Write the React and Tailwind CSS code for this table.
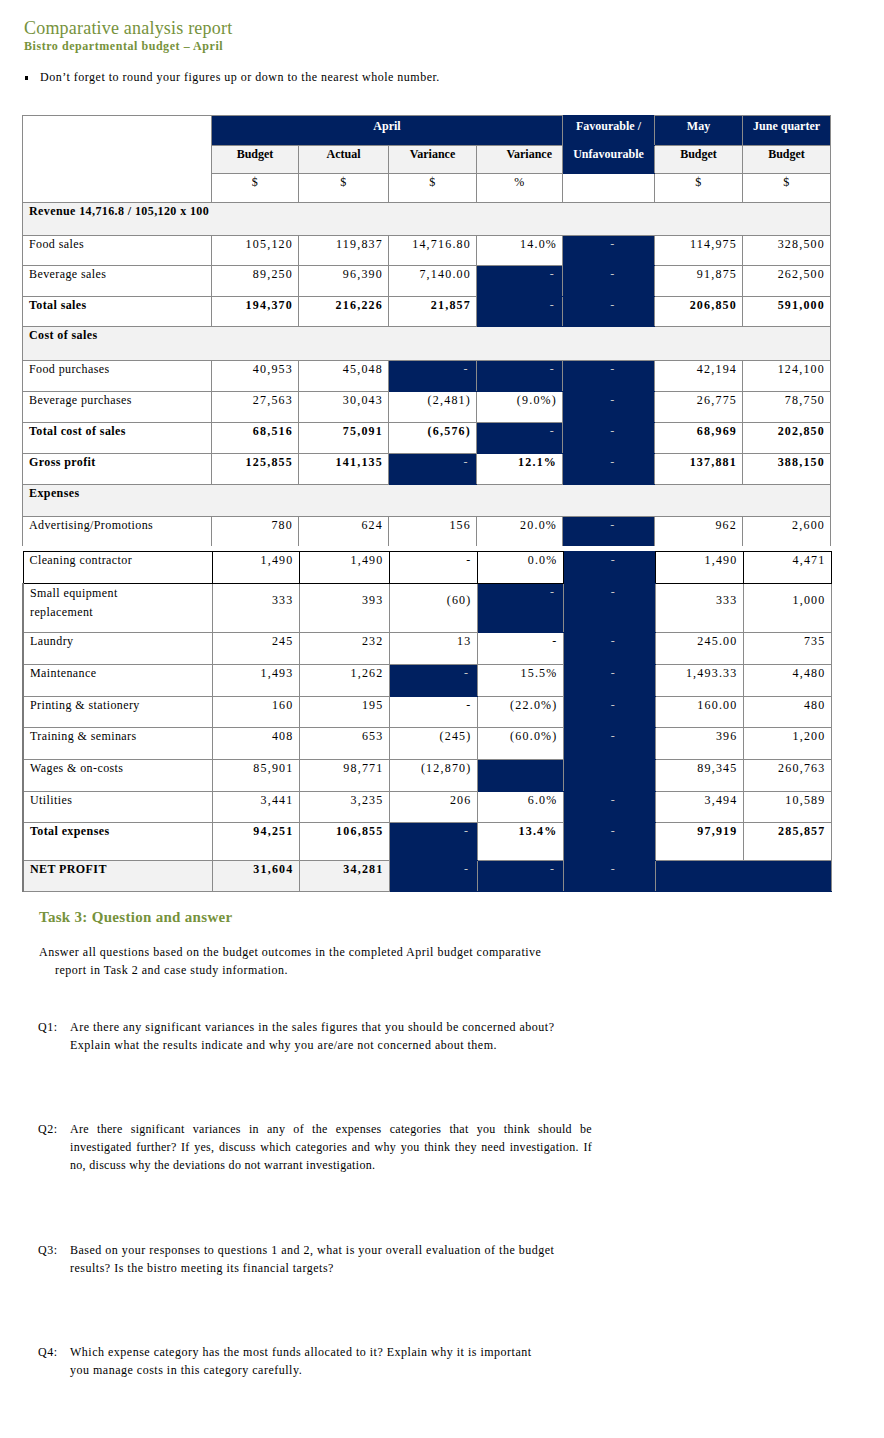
import React from 'react';

// Comparative analysis report – bistro budget table + Task 3 questions

const B = 'border border-[#8a8a8a]';
const DARK = 'bg-[#002060] border-y-[#002060]';

const upper = [
  { section: 'Revenue 14,716.8 / 105,120 x 100', h: 33 },
  { label: 'Food sales', h: 30, cells: ['105,120', '119,837', '14,716.80', '14.0%', 'D-', '114,975', '328,500'] },
  { label: 'Beverage sales', h: 31, cells: ['89,250', '96,390', '7,140.00', 'D-', 'D-', '91,875', '262,500'] },
  { label: 'Total sales', h: 30, bold: true, cells: ['194,370', '216,226', '21,857', 'D-', 'D-', '206,850', '591,000'] },
  { section: 'Cost of sales', h: 34 },
  { label: 'Food purchases', h: 31, cells: ['40,953', '45,048', 'D-', 'D-', 'D-', '42,194', '124,100'] },
  { label: 'Beverage purchases', h: 31, cells: ['27,563', '30,043', '(2,481)', '(9.0%)', 'D-', '26,775', '78,750'] },
  { label: 'Total cost of sales', h: 31, bold: true, cells: ['68,516', '75,091', '(6,576)', 'D-', 'D-', '68,969', '202,850'] },
  { label: 'Gross profit', h: 31, bold: true, cells: ['125,855', '141,135', 'D-', '12.1%', 'D-', '137,881', '388,150'] },
  { section: 'Expenses', h: 32 },
  { label: 'Advertising/Promotions', h: 29, open: true, cells: ['780', '624', '156', '20.0%', 'D-', '962', '2,600'] },
];

const lower = [
  { label: 'Cleaning contractor', h: 32, black: true, cells: ['1,490', '1,490', '-', '0.0%', 'D-', '1,490', '4,471'] },
  { label: ['Small equipment', 'replacement'], h: 49, numPt: 'pt-[8px]', cells: ['333', '393', '(60)', 'D-', 'D-', '333', '1,000'] },
  { label: 'Laundry', h: 32, cells: ['245', '232', '13', '-', 'D-', '245.00', '735'] },
  { label: 'Maintenance', h: 32, cells: ['1,493', '1,262', 'D-', '15.5%', 'D-', '1,493.33', '4,480'] },
  { label: 'Printing & stationery', h: 31, cells: ['160', '195', '-', '(22.0%)', 'D-', '160.00', '480'] },
  { label: 'Training & seminars', h: 32, cells: ['408', '653', '(245)', '(60.0%)', 'D-', '396', '1,200'] },
  { label: 'Wages & on-costs', h: 32, cells: ['85,901', '98,771', '(12,870)', 'D', 'D', '89,345', '260,763'] },
  { label: 'Utilities', h: 31, cells: ['3,441', '3,235', '206', '6.0%', 'D-', '3,494', '10,589'] },
  { label: 'Total expenses', h: 38, bold: true, cells: ['94,251', '106,855', 'D-', '13.4%', 'D-', '97,919', '285,857'] },
  { label: 'NET PROFIT', h: 31, bold: true, gray: true, cells: ['31,604', '34,281', 'D-', 'D-', 'D-', 'DD'] },
];

function Cols() {
  return (
    <colgroup>
      <col className="w-[189px]" />
      <col className="w-[87px]" />
      <col className="w-[90px]" />
      <col className="w-[88px]" />
      <col className="w-[86px]" />
      <col className="w-[92px]" />
      <col className="w-[88px]" />
      <col className="w-[88px]" />
    </colgroup>
  );
}

function BodyRow({ row, first }) {
  const bc = row.black ? 'border border-black' : B;
  const bottom = row.open ? 'border-b-0' : '';
  const leftEdge = first && !row.black ? 'border-l-2 border-l-[#7a7a7a]' : '';
  if (row.section) {
    return (
      <tr style={{ height: row.h }}>
        <td colSpan={8} className={`${B} bg-[#f2f2f2] align-top pl-[6px] pt-0 font-bold`}>
          {row.section}
        </td>
      </tr>
    );
  }
  return (
    <tr style={{ height: row.h }}>
      <td
        className={`${bc} ${bottom} ${leftEdge} align-top pl-[6px] pt-0 ${row.bold ? 'font-bold' : ''} ${
          row.gray ? 'bg-[#f2f2f2]' : ''
        }`}
      >
        {Array.isArray(row.label) ? (
          <div className="leading-[19px]">
            {row.label[0]}
            <br />
            {row.label[1]}
          </div>
        ) : (
          row.label
        )}
      </td>
      {row.cells.map((c, i) => {
        if (c === 'DD') {
          return <td key={i} colSpan={2} className={`${bc} ${DARK}`} />;
        }
        if (c === 'D' || c === 'D-') {
          const fav = i === 4;
          return (
            <td
              key={i}
              className={`${bc} ${DARK} ${bottom} align-top pt-0 text-[#c8c8c8] ${
                fav ? 'text-center pl-[8px]' : 'text-right pr-[8px]'
              } ${row.black ? 'border-black' : ''}`}
            >
              {c === 'D-' ? '-' : ''}
            </td>
          );
        }
        return (
          <td
            key={i}
            className={`${bc} ${bottom} align-top text-right pr-[5px] tracking-[1.2px] ${row.numPt || 'pt-0'} ${
              row.bold ? 'font-bold tracking-[0.6px]' : ''
            } ${row.gray ? 'bg-[#f2f2f2]' : ''}`}
          >
            {c}
          </td>
        );
      })}
    </tr>
  );
}

export default function App() {
  return (
    <div className="min-h-[1438px] w-[884px] bg-white text-black font-['Liberation_Serif',serif]">
      {/* Title */}
      <div className="pl-[24px] pt-[18px]">
        <div className="text-[18px] leading-[20px] tracking-[0.2px] text-[#76923c]">Comparative analysis report</div>
        <div className="text-[12px] leading-[16px] tracking-[0.55px] font-bold text-[#76923c]">
          Bistro departmental budget – April
        </div>
      </div>

      <div className="mt-[15px] flex items-center text-[12px] leading-[16px] tracking-[0.5px]">
        <span className="ml-[25px] mr-[12px] mt-[1px] w-[3px] h-[4px] bg-black" />
        <span>Don’t forget to round your figures up or down to the nearest whole number.</span>
      </div>

      {/* Table */}
      <div className="ml-[22px] mt-[30px] text-[12px] leading-[16px] tracking-[0.4px]">
        <table className="table-fixed w-[808px] border-collapse">
          <Cols />
          <tbody>
            <tr className="h-[30px] tracking-normal">
              <td rowSpan={3} className={`${B} bg-white`} />
              <td colSpan={4} className={`${B} bg-[#002060] text-white font-bold text-center align-top pt-[2px]`}>
                April
              </td>
              <td className={`${B} ${DARK} text-white font-bold text-center align-top pt-[2px]`}>Favourable /</td>
              <td className={`${B} bg-[#002060] text-white font-bold text-center align-top pt-[2px]`}>May</td>
              <td className={`${B} bg-[#002060] text-white font-bold text-center align-top pt-[2px]`}>June quarter</td>
            </tr>
            <tr className="h-[28px] font-bold tracking-normal">
              <td className={`${B} bg-[#f2f2f2] text-center align-top`}>Budget</td>
              <td className={`${B} bg-[#f2f2f2] text-center align-top`}>Actual</td>
              <td className={`${B} bg-[#f2f2f2] text-center align-top`}>Variance</td>
              <td className={`${B} bg-[#f2f2f2] text-right pr-[10px] align-top`}>Variance</td>
              <td className={`${B} ${DARK} text-white text-center align-top`}>Unfavourable</td>
              <td className={`${B} bg-[#f2f2f2] text-center align-top`}>Budget</td>
              <td className={`${B} bg-[#f2f2f2] text-center align-top`}>Budget</td>
            </tr>
            <tr className="h-[29px]">
              <td className={`${B} text-center align-top`}>$</td>
              <td className={`${B} text-center align-top`}>$</td>
              <td className={`${B} text-center align-top`}>$</td>
              <td className={`${B} text-center align-top`}>%</td>
              <td className={`${B}`} />
              <td className={`${B} text-center align-top`}>$</td>
              <td className={`${B} text-center align-top`}>$</td>
            </tr>
            {upper.map((r, i) => (
              <BodyRow key={i} row={r} />
            ))}
          </tbody>
        </table>

        <table className="table-fixed w-[808px] border-collapse mt-[5px]">
          <Cols />
          <tbody>
            {lower.map((r, i) => (
              <BodyRow key={i} row={r} first />
            ))}
          </tbody>
        </table>
      </div>

      {/* Task 3 */}
      <div className="text-[12px] leading-[18px] tracking-[0.5px]">
        <div className="ml-[39px] mt-[15px] text-[15px] leading-[20px] font-bold text-[#76923c] tracking-[0.3px]">
          Task 3: Question and answer
        </div>

        <div className="mt-[16px]">
          <div className="ml-[39px]">
            Answer all questions based on the budget outcomes in the completed April budget comparative
          </div>
          <div className="ml-[55px]">report in Task 2 and case study information.</div>
        </div>

        <div className="mt-[39px] flex">
          <div className="ml-[38px] w-[32px]">Q1:</div>
          <div>
            <div>Are there any significant variances in the sales figures that you should be concerned about?</div>
            <div>Explain what the results indicate and why you are/are not concerned about them.</div>
          </div>
        </div>

        <div className="mt-[66px] flex">
          <div className="ml-[38px] w-[32px]">Q2:</div>
          <div className="w-[522px] tracking-[0.3px]">
            <div className="text-justify [text-align-last:justify]">
              Are there significant variances in any of the expenses categories that you think should be
            </div>
            <div className="text-justify [text-align-last:justify]">
              investigated further? If yes, discuss which categories and why you think they need investigation. If
            </div>
            <div>no, discuss why the deviations do not warrant investigation.</div>
          </div>
        </div>

        <div className="mt-[67px] flex">
          <div className="ml-[38px] w-[32px]">Q3:</div>
          <div>
            <div>Based on your responses to questions 1 and 2, what is your overall evaluation of the budget</div>
            <div>results? Is the bistro meeting its financial targets?</div>
          </div>
        </div>

        <div className="mt-[66px] flex">
          <div className="ml-[38px] w-[32px]">Q4:</div>
          <div>
            <div>Which expense category has the most funds allocated to it? Explain why it is important</div>
            <div>you manage costs in this category carefully.</div>
          </div>
        </div>
      </div>
    </div>
  );
}
